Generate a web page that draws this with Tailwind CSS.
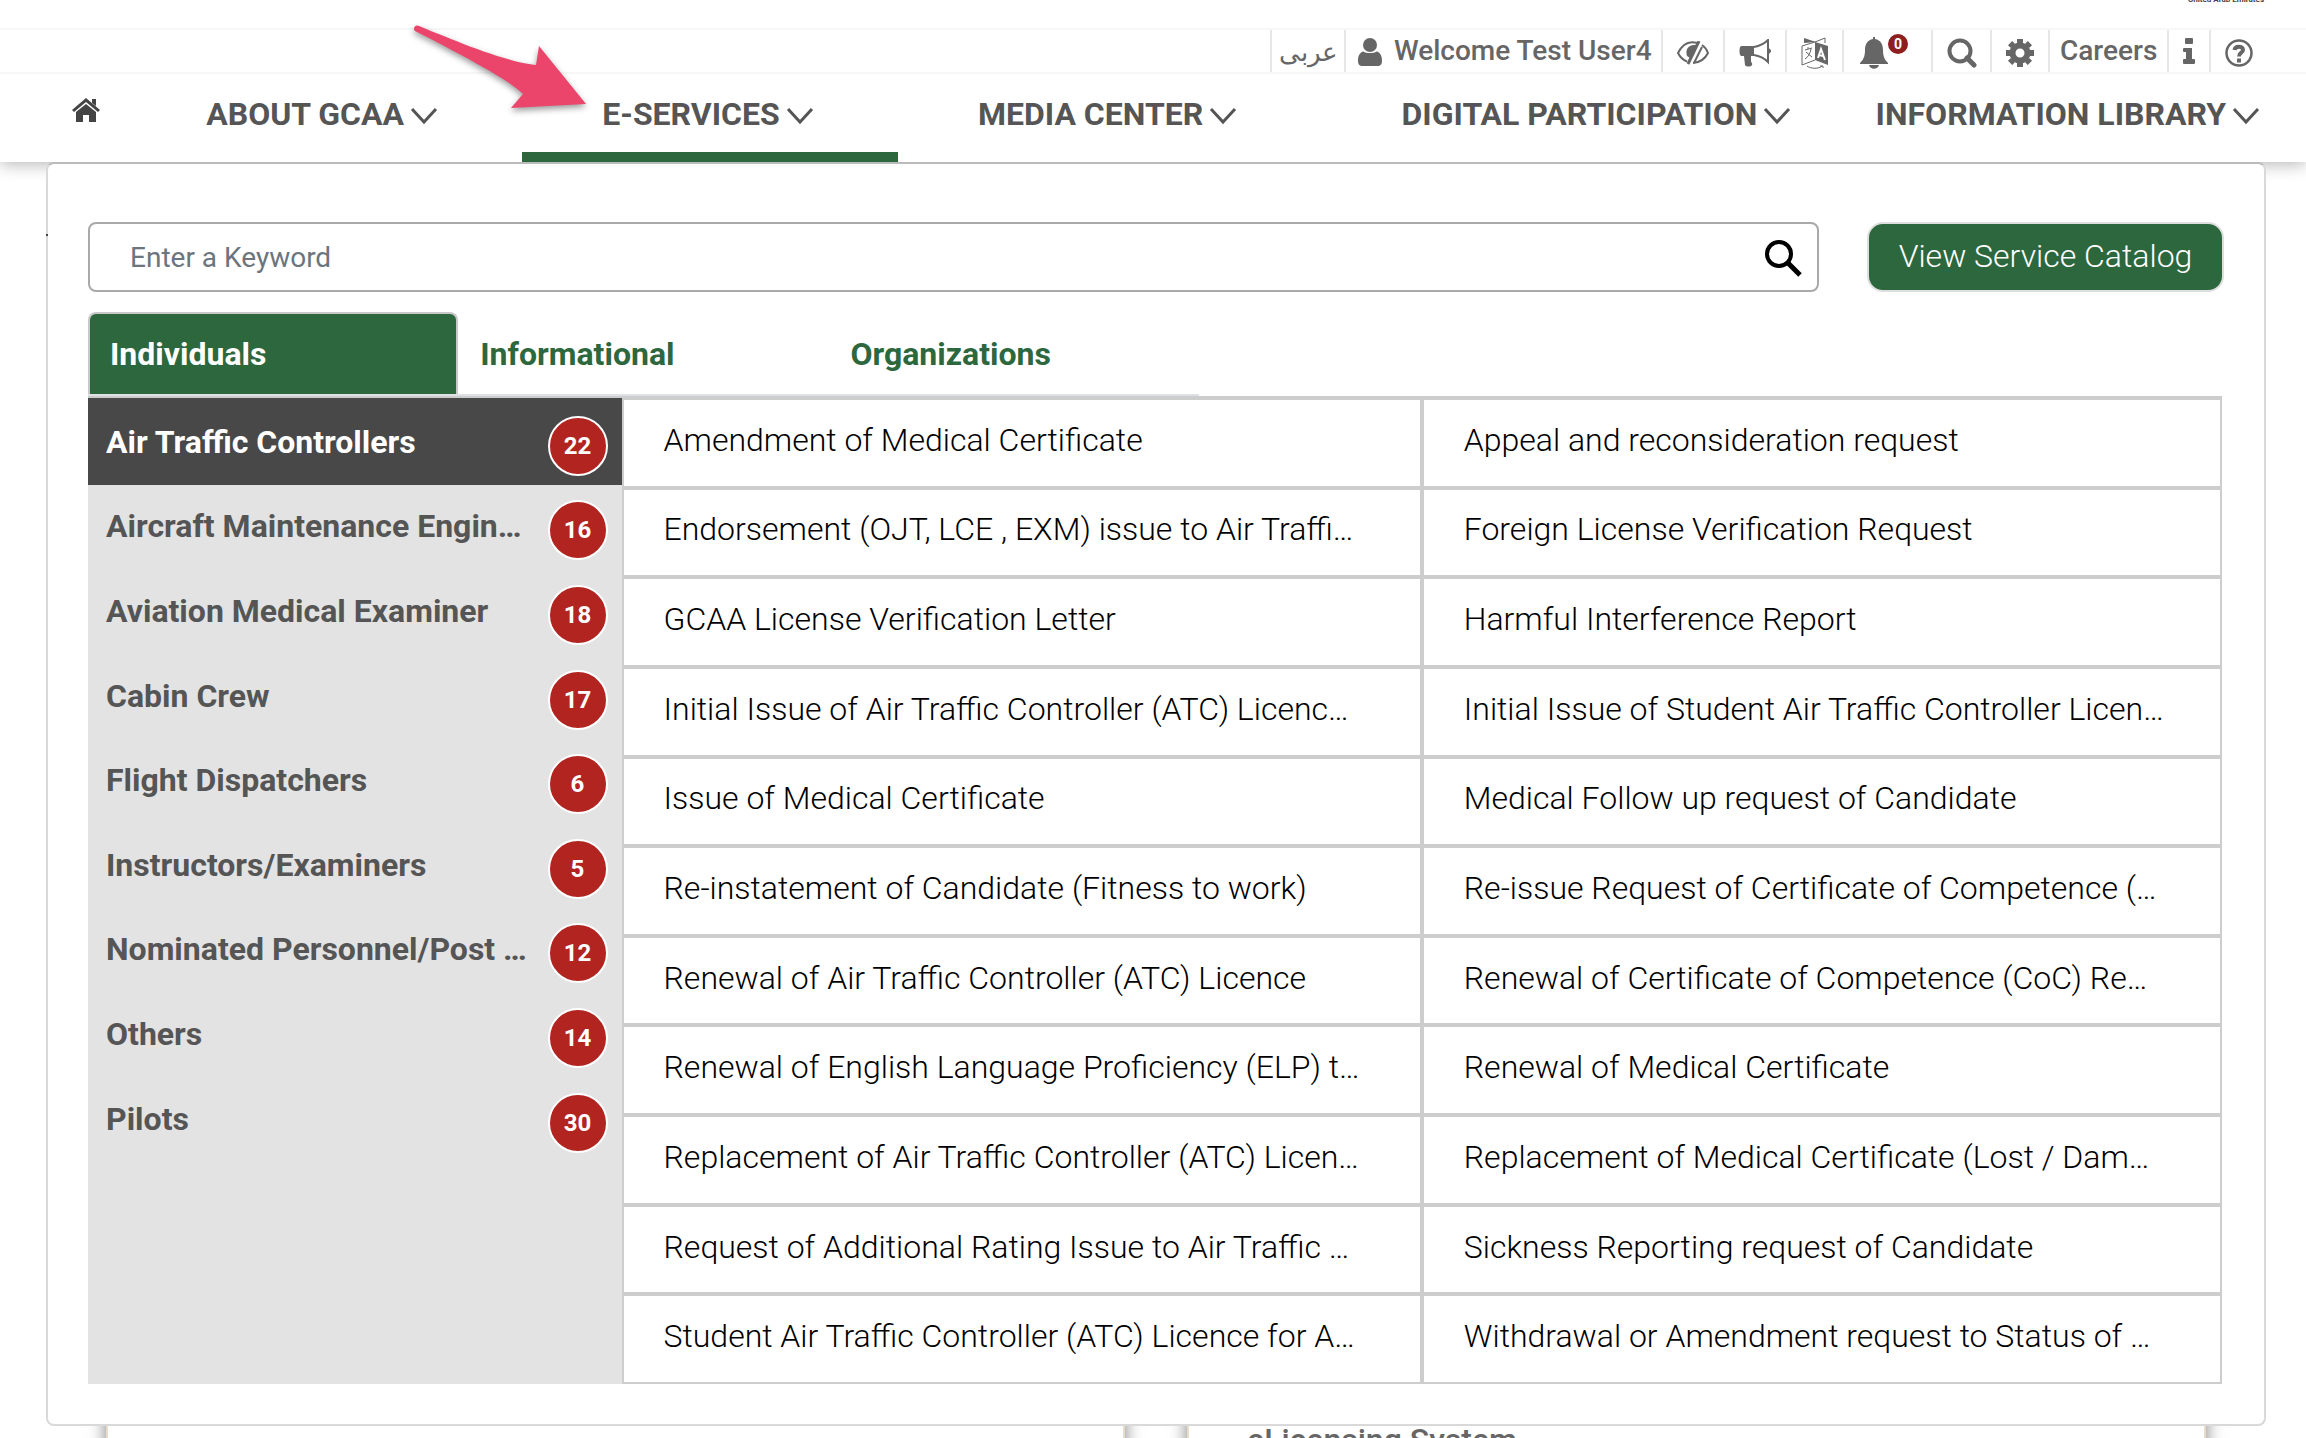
<!DOCTYPE html>
<html lang="en">
<head>
  <meta charset="UTF-8">
  <meta name="viewport" content="width=device-width, initial-scale=1.0">
  <title>GCAA E-Services</title>
  <script src="https://cdn.jsdelivr.net/npm/@tailwindcss/browser@4"></script>
</head>
<body class="flex h-screen flex-col overflow-hidden bg-white font-['Roboto',sans-serif] text-[32px]/[40px]">

<header class="relative shadow-[0_2px_16px_rgba(0,0,0,0.3)]">
  <!-- Logo caption -->
  <div class="h-7 overflow-hidden pr-[42px] text-right text-[8px]/[8px] font-bold text-[#444]">
    <p class="-mt-1">United Arab Emirates</p>
  </div>

  <!-- Utility bar -->
  <div class="flex h-[46px] justify-end border-y-2 border-[#f7f7f7] pr-[39px] text-[28px]/[42px] font-medium text-[#666]">
    <a href="#" class="flex w-[74px] items-center justify-center border-l-2 border-[#e7e7e7] pt-0.5 text-[26px] font-normal" lang="ar">عربى</a>
    <a href="#" class="flex w-[317px] border-l-2 border-[#e7e7e7] pl-3">
      <svg class="mt-2 mr-3 h-7 w-6" viewBox="0 0 24 28" fill="currentColor"><circle cx="12" cy="7" r="7"/><path d="M5.500 13.500C8 15.500 16 15.500 18.500 13.500C22 14 24 18 24 22.500C24 26.500 22.500 28 19.500 28H4.500C1.500 28 0 26.500 0 22.500C0 18 2 14 5.500 13.500Z"/></svg>
      Welcome Test User4
    </a>
    <button class="flex w-[62px] items-center justify-center border-l-2 border-[#e7e7e7] pt-1" aria-label="Accessibility">
      <svg class="h-6 w-8" viewBox="0 0 32 24" fill="none" stroke="currentColor" stroke-width="2"><path d="M20 2C10 -1 4 6 1 12C3 16 6 19 10 20.500M25 4C28 6 30 9 31 12C28 18 23 21.500 16 22"/><path d="M17 4C11 4 8 9 10 15L13 17L20 4Z" fill="currentColor" stroke="none"/><path d="M22 0L11 23" stroke-width="3"/><path d="M25 6L17 22"/></svg>
    </button>
    <button class="flex w-[62px] items-center justify-center border-l-2 border-[#e7e7e7] pt-1" aria-label="Announcements">
      <svg class="h-7 w-8" viewBox="0 0 32 28" fill="currentColor"><path d="M2 7H15V17H12V22C12 24 14 24 13 26C12 28 7 28 6 26L5 17H2C0 16 0 8 2 7Z"/><path d="M15 8C21 7 26 4 29 1V23C26 20 21 17 15 16" fill="none" stroke="currentColor" stroke-width="2"/><path d="M29 9C33 10 33 14 29 15Z"/></svg>
    </button>
    <button class="flex w-[57px] items-center justify-center border-l-2 border-[#e7e7e7] pt-1" aria-label="Translate">
      <svg class="h-8 w-7" viewBox="0 0 28 32" fill="currentColor"><path d="M3 1L15 5L3 6Z"/><path d="M14 5L24 1V6" fill="none" stroke="currentColor"/><path d="M14 5L27 9V28L14 23Z"/><path d="M14 5L1 9V28L14 23" fill="none" stroke="currentColor"/><path d="M4 13L11 11M7 10V12M10 12C9 17 7 20 4 22M5 15L11 20" fill="none" stroke="currentColor"/><path d="M17 21L20 12L24 23M18 18L22 19" fill="none" stroke="#fff" stroke-width="2"/><path d="M6 29C10 32 18 32 21 29M19 29H22V31" fill="none" stroke="currentColor"/></svg>
    </button>
    <button class="relative flex w-[89px] items-center border-l-2 border-[#e7e7e7] pt-1 pl-4" aria-label="Notifications">
      <svg class="h-8 w-7" viewBox="0 0 28 32" fill="currentColor"><path d="M13 0H15V2C21 3 23 8 23 13C23 20 25 23 28 26V27H0V26C3 23 5 20 5 13C5 8 7 3 13 2ZM9 28H19C18 33 10 33 9 28Z"/></svg>
      <span class="absolute top-1 left-11 grid size-5 place-items-center rounded-full bg-[#8e1f1f] text-sm font-bold text-white">0</span>
    </button>
    <button class="flex w-[59px] items-center justify-center border-l-2 border-[#e7e7e7] pt-1" aria-label="Search">
      <svg class="size-[30px]" viewBox="0 0 30 30" fill="none" stroke="currentColor"><circle cx="13" cy="13" r="10.500" stroke-width="4"/><path d="M20 20L27 27" stroke-width="5" stroke-linecap="round"/></svg>
    </button>
    <button class="flex w-[58px] items-center justify-center border-l-2 border-[#e7e7e7] pt-1" aria-label="Settings">
      <svg class="size-7" viewBox="0 0 28 28" fill="none" stroke="currentColor"><circle cx="14" cy="14" r="7.500" stroke-width="6"/><path d="M14 0V5M14 23V28M0 14H5M23 14H28M4.100 4.100L7 7M21 21L23.900 23.900M4.100 23.900L7 21M21 7L23.900 4.100" stroke-width="6"/></svg>
    </button>
    <a href="#" class="w-[119px] border-l-2 border-[#e7e7e7] pl-2.5">Careers</a>
    <button class="flex w-[42px] items-center justify-center border-l-2 border-[#e7e7e7]" aria-label="Information">
      <svg class="h-[26px] w-3" viewBox="0 0 12 26" fill="currentColor"><rect x="2" width="8" height="6" rx="1"/><path d="M1 10H9V21H11Q12 21 12 22V25Q12 26 11 26H1Q0 26 0 25V22Q0 21 1 21H3V14H1Q0 14 0 13V11Q0 10 1 10Z"/></svg>
    </button>
    <button class="flex w-[58px] items-center justify-center border-l-2 border-[#e7e7e7] pt-1" aria-label="Help">
      <svg class="size-7" viewBox="0 0 28 28" fill="none" stroke="currentColor"><circle cx="14" cy="14" r="12.500" stroke-width="2.500"/><path d="M9.500 11C10 6.500 18 6.500 18 11C18 14 14 13.500 14 17.500" stroke-width="4"/><path d="M12 21.500H16" stroke-width="4"/></svg>
    </button>
  </div>

  <!-- Main menu -->
  <nav class="flex h-22 justify-between pr-[46px] pl-12 font-bold whitespace-nowrap text-[#555]">
    <a href="#" class="pt-[22px] pl-6" aria-label="Home">
      <svg class="size-7" viewBox="0 0 28 24" fill="#444"><path d="M14 0L28 12L26 14L14 4L2 14L0 12Z"/><path d="M20 1H24V8L20 5Z"/><path d="M14 6L24 14V24H17V17H11V24H4V14Z"/></svg>
    </a>
    <a href="#" class="flex items-start gap-1.5 pt-5 pr-[84px] pl-[106px]">ABOUT GCAA <svg class="mt-3 h-5 w-7" viewBox="0 0 28 20" fill="none" stroke="currentColor" stroke-width="3"><path d="M2 3L14 16L26 3"/></svg></a>
    <a href="#" class="flex items-start gap-1.5 border-b-10 border-[#2d673e] pt-5 pr-[84px] pl-20">E-SERVICES <svg class="mt-3 h-5 w-7" viewBox="0 0 28 20" fill="none" stroke="currentColor" stroke-width="3"><path d="M2 3L14 16L26 3"/></svg></a>
    <a href="#" class="flex items-start gap-1.5 pt-5 pr-[84px] pl-20">MEDIA CENTER <svg class="mt-3 h-5 w-7" viewBox="0 0 28 20" fill="none" stroke="currentColor" stroke-width="3"><path d="M2 3L14 16L26 3"/></svg></a>
    <a href="#" class="flex items-start gap-1.5 pt-5 pr-[84px] pl-20">DIGITAL PARTICIPATION <svg class="mt-3 h-5 w-7" viewBox="0 0 28 20" fill="none" stroke="currentColor" stroke-width="3"><path d="M2 3L14 16L26 3"/></svg></a>
    <a href="#" class="flex items-start gap-1.5 pt-5">INFORMATION LIBRARY <svg class="mt-3 h-5 w-7" viewBox="0 0 28 20" fill="none" stroke="currentColor" stroke-width="3"><path d="M2 3L14 16L26 3"/></svg></a>
  </nav>

  <!-- Pointer arrow -->
  <svg class="absolute top-5 left-[408px] z-20 h-[104px] w-[190px] drop-shadow-[0_3px_3px_rgba(0,0,0,0.4)]" viewBox="0 0 190 104" fill="#eb456c"><path d="M11 6C50 22 98 42 128 45L131 26L178 84L103 88L115 74C102 60 48 32 7 11C4 8 8 4 11 6Z"/></svg>
</header>

<!-- E-Services menu -->
<section class="relative z-10 mx-10 ml-[46px] rounded-lg border-2 border-[#d9d9d9] border-t-[#bbb] bg-white px-10 pt-[58px] pb-10">
  <span class="absolute top-[70px] -left-0.5 size-0.5 bg-[#444]"></span>
  <form class="flex gap-12">
    <div class="relative flex-1">
      <label for="keyword" class="sr-only">Enter a Keyword</label>
      <input id="keyword" type="text" placeholder="Enter a Keyword" class="h-[70px] w-full rounded-lg border-2 border-[#a9a9a9] px-10 text-[28px] placeholder:text-[#6c757d]">
      <button type="button" class="absolute top-4 right-4" aria-label="Search">
        <svg class="size-10" viewBox="0 0 40 40" fill="none" stroke="#000"><circle cx="16" cy="16" r="12" stroke-width="4"/><path d="M24 24L37 37" stroke-width="5"/></svg>
      </button>
    </div>
    <button type="button" class="h-[70px] w-[357px] rounded-2xl border-2 border-[#dedede] bg-[#2d673e] pb-0.5 font-light text-white">View Service Catalog</button>
  </form>

  <!-- Tabs -->
  <div role="tablist" class="mt-5 grid w-[52%] grid-cols-3 border-b-2 border-[#dee2e6] text-left font-bold text-[#2d673e]">
    <button role="tab" class="h-[82px] rounded-t-lg border-2 border-b-0 border-[#c8c8c8] bg-[#2d673e] px-5 text-left text-white">Individuals</button>
    <button role="tab" class="px-[22px] pt-0.5 text-left">Informational</button>
    <button role="tab" class="px-[22px] pt-0.5 text-left">Organizations</button>
  </div>

  <div class="mr-0.5 flex border-t-2 border-[#cdcdcd]">
    <!-- Categories -->
    <div class="h-[986px] w-1/4 bg-[#e3e3e3]">
      <ul id="categories" class="grid h-[764px] grid-rows-[87px_repeat(8,1fr)] font-bold text-[#555]"></ul>
    </div>
    <!-- Services -->
    <ul id="services" class="grid flex-1 grid-cols-2 grid-rows-11 font-light text-black"></ul>
  </div>
</section>

<!-- Page cards -->
<main class="-mt-6 grid min-h-0 flex-1 grid-cols-2 gap-[62px] overflow-hidden pr-[100px] pl-[106px]">
  <div class="border-2 border-b-0 border-[#e6dcc8] shadow-[0_0_16px_rgba(0,0,0,0.5)]"></div>
  <div class="border-2 border-b-0 border-[#e6dcc8] px-[58px] pt-4 font-medium text-[#666] shadow-[0_0_16px_rgba(0,0,0,0.5)]">eLicensing System</div>
</main>

<script>
  const categories = [
    ['Air Traffic Controllers', 22],
    ['Aircraft Maintenance Engin…', 16],
    ['Aviation Medical Examiner', 18],
    ['Cabin Crew', 17],
    ['Flight Dispatchers', 6],
    ['Instructors/Examiners', 5],
    ['Nominated Personnel/Post …', 12],
    ['Others', 14],
    ['Pilots', 30],
  ];

  const services = [
    'Amendment of Medical Certificate', 'Appeal and reconsideration request',
    'Endorsement (OJT, LCE , EXM) issue to Air Traffi…', 'Foreign License Verification Request',
    'GCAA License Verification Letter', 'Harmful Interference Report',
    'Initial Issue of Air Traffic Controller (ATC) Licenc…', 'Initial Issue of Student Air Traffic Controller Licen…',
    'Issue of Medical Certificate', 'Medical Follow up request of Candidate',
    'Re-instatement of Candidate (Fitness to work)', 'Re-issue Request of Certificate of Competence (…',
    'Renewal of Air Traffic Controller (ATC) Licence', 'Renewal of Certificate of Competence (CoC) Re…',
    'Renewal of English Language Proficiency (ELP) t…', 'Renewal of Medical Certificate',
    'Replacement of Air Traffic Controller (ATC) Licen…', 'Replacement of Medical Certificate (Lost / Dam…',
    'Request of Additional Rating Issue to Air Traffic …', 'Sickness Reporting request of Candidate',
    'Student Air Traffic Controller (ATC) Licence for A…', 'Withdrawal or Amendment request to Status of …',
  ];

  document.getElementById('categories').innerHTML = categories.map(([name, count], i) => `
    <li class="${i === 0 ? 'bg-[#484848] pt-0.5 text-white' : ''}">
      <a href="#" class="flex h-full items-center justify-between pt-1.5 pr-3.5 pl-[18px]">
        <span class="pb-2">${name}</span>
        <span class="grid size-[60px] place-items-center rounded-full border-2 border-white bg-[#b22420] text-2xl text-white">${count}</span>
      </a>
    </li>`).join('');

  document.getElementById('services').innerHTML = services.map(name => `
    <li class="flex min-w-0 border-2 border-[#cdcdcd]">
      <a href="#" class="w-full truncate self-center px-10 pb-1.5">${name}</a>
    </li>`).join('');
</script>
</body>
</html>
